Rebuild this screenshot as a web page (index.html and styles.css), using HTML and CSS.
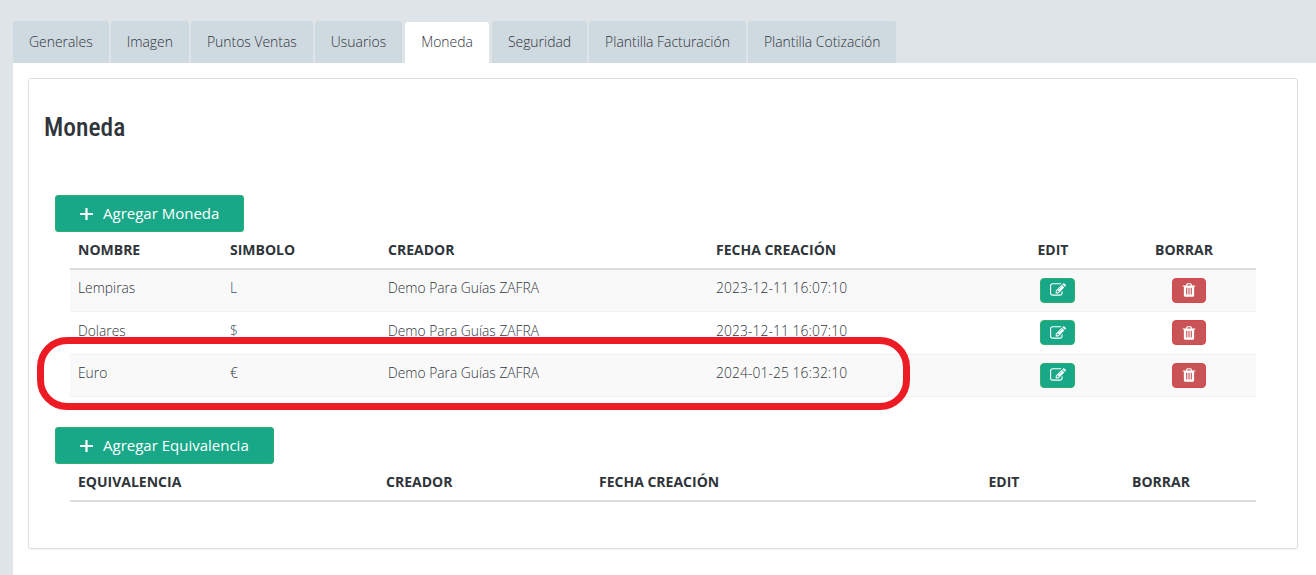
FILE: index.html
```html
<!DOCTYPE html>
<html lang="es">
<head>
<meta charset="utf-8">
<title>Moneda</title>
<link rel="stylesheet" href="styles.css">
</head>
<body>
<svg class="sprite" width="0" height="0" aria-hidden="true">
  <symbol id="i-edit" viewBox="0 0 1792 1792"><path d="M888 1184l116-116-152-152-116 116v56h96v96h56zm440-720q-16-16-33 1l-350 350q-17 17-1 33t33-1l350-350q17-17 1-33zm80 594v190q0 119-84.5 203.5t-203.5 84.5h-832q-119 0-203.5-84.5t-84.5-203.5v-832q0-119 84.5-203.5t203.5-84.5h832q63 0 117 25 15 7 18 23 3 17-9 29l-49 49q-14 14-32 8-23-6-45-6h-832q-66 0-113 47t-47 113v832q0 66 47 113t113 47h832q66 0 113-47t47-113v-126q0-13 9-22l64-64q15-15 35-7t20 29zm-96-738l288 288-672 672h-288v-288zm444 132l-92 92-288-288 92-92q28-28 68-28t68 28l152 152q28 28 28 68t-28 68z"/></symbol>
  <symbol id="i-trash" viewBox="0 0 1792 1792"><path d="M704 1376v-704q0-14-9-23t-23-9h-64q-14 0-23 9t-9 23v704q0 14 9 23t23 9h64q14 0 23-9t9-23zm256 0v-704q0-14-9-23t-23-9h-64q-14 0-23 9t-9 23v704q0 14 9 23t23 9h64q14 0 23-9t9-23zm256 0v-704q0-14-9-23t-23-9h-64q-14 0-23 9t-9 23v704q0 14 9 23t23 9h64q14 0 23-9t9-23zm-544-992h448l-48-117q-7-9-17-11h-317q-10 2-17 11zm928 32v64q0 14-9 23t-23 9h-96v948q0 83-47 143.5t-113 60.5h-832q-66 0-113-58.5t-47-141.5v-952h-96q-14 0-23-9t-9-23v-64q0-14 9-23t23-9h309l70-167q15-37 54-63t79-26h320q40 0 79 26t54 63l70 167h309q14 0 23 9t9 23z"/></symbol>
  <symbol id="i-plus" viewBox="0 0 13 12"><path d="M5.4 0h2.2v4.9H13v2.2H7.600V12H5.400V7.100H0V4.900h5.400z"/></symbol>
</svg>
<nav class="tabs">
  <a class="tab">Generales</a>
  <a class="tab">Imagen</a>
  <a class="tab">Puntos Ventas</a>
  <a class="tab">Usuarios</a>
  <a class="tab tab-active">Moneda</a>
  <a class="tab">Seguridad</a>
  <a class="tab">Plantilla Facturación</a>
  <a class="tab">Plantilla Cotización</a>
</nav>
<main class="panel">
  <section class="card">
    <h2 class="title">Moneda</h2>
    <button class="add"><svg class="plus"><use href="#i-plus"/></svg>Agregar Moneda</button>
    <table class="grid grid-first">
      <colgroup><col class="c152"><col class="c158"><col class="c328"><col class="c294"><col class="c110"><col class="c144"></colgroup>
      <thead><tr><th>NOMBRE</th><th>SIMBOLO</th><th>CREADOR</th><th>FECHA CREACIÓN</th><th class="mid th-edit">EDIT</th><th class="mid">BORRAR</th></tr></thead>
      <tbody>
        <tr><td>Lempiras</td><td class="sym">L</td><td>Demo Para Guías ZAFRA</td><td class="date">2023-12-11 16:07:10</td><td class="mid"><a class="act edit"><svg><use href="#i-edit"/></svg></a></td><td class="mid td-del"><a class="act del"><svg><use href="#i-trash"/></svg></a></td></tr>
        <tr><td>Dolares</td><td class="sym">$</td><td>Demo Para Guías ZAFRA</td><td class="date">2023-12-11 16:07:10</td><td class="mid"><a class="act edit"><svg><use href="#i-edit"/></svg></a></td><td class="mid td-del"><a class="act del"><svg><use href="#i-trash"/></svg></a></td></tr>
        <tr><td>Euro</td><td>€</td><td>Demo Para Guías ZAFRA</td><td class="date">2024-01-25 16:32:10</td><td class="mid"><a class="act edit"><svg><use href="#i-edit"/></svg></a></td><td class="mid td-del"><a class="act del"><svg><use href="#i-trash"/></svg></a></td></tr>
      </tbody>
    </table>
    <button class="add add-second"><svg class="plus"><use href="#i-plus"/></svg>Agregar Equivalencia</button>
    <table class="grid">
      <colgroup><col class="c308"><col class="c213"><col class="c351"><col class="c124"><col class="c190"></colgroup>
      <thead><tr><th>EQUIVALENCIA</th><th>CREADOR</th><th>FECHA CREACIÓN</th><th class="mid">EDIT</th><th class="mid">BORRAR</th></tr></thead>
    </table>
  </section>
</main>
<div class="highlight"></div>
</body>
</html>
```
FILE: styles.css
```css
* { box-sizing: border-box; }
html, body { height: 100%; }
body {
  margin: 0;
  padding: 21px 0 0 13px;
  background: #dfe4e8;
  font-family: "Open Sans", sans-serif;
  color: #333a40;
  overflow: hidden;
  position: relative;
}
.sprite { position: absolute; }
.tabs { display: flex; height: 42px; }
.tab {
  display: flex;
  align-items: center;
  padding: 0 16px 2px;
  margin-right: 2px;
  background: #cfd9e0;
  border-radius: 3px 3px 0 0;
  font-size: 13.93px;
  font-weight: 300;
  color: #2f353b;
  white-space: nowrap;
}
.tab:nth-child(4) { margin-right: 3px; }
.tab-active { background: #fff; margin-right: 3px; margin-top: 1px; padding-bottom: 3px; }
.panel {
  background: #fff;
  padding: 15px 18px 40px 15px;
  height: 512px;
}
.card {
  height: 471px;
  border: 1px solid #dcdfe1;
  border-radius: 3px;
  box-shadow: 0 1px 1px rgba(0,0,0,.04);
}
.title {
  margin: 0;
  padding: 31px 0 0 15px;
  height: 116px;
  font-family: Roboto, sans-serif;
  font-stretch: 85%;
  font-size: 25.5px;
  line-height: 34px;
  font-weight: 500;
  color: #2f353a;
}
.add {
  display: flex;
  align-items: center;
  height: 37px;
  margin-left: 26px;
  padding: 0 24px 2px;
  background: #18a888;
  border: 1px solid #2dae72;
  border-radius: 3px;
  color: #fff;
  font-family: "Open Sans", sans-serif;
  font-size: 15px;
}
.add-second { margin-top: 30px; padding-bottom: 0; }
.plus { width: 13px; height: 12px; margin: 2px 10px 0 0; fill: #fff; }
.grid {
  width: 1186px;
  margin-left: 41px;
  table-layout: fixed;
  border-collapse: collapse;
}
.c152 { width: 152px; } .c158 { width: 158px; } .c328 { width: 328px; }
.c294 { width: 294px; } .c110 { width: 110px; } .c144 { width: 144px; }
.c308 { width: 308px; } .c213 { width: 213px; } .c351 { width: 351px; }
.c124 { width: 124px; } .c190 { width: 190px; }
th {
  height: 37px;
  padding: 0 8px;
  text-align: left;
  font-size: 14px;
  font-weight: 700;
  color: #2f353a;
  border-bottom: 2px solid #dcdcdc;
}
.grid-first th { padding-bottom: 2px; }
td {
  height: 42px;
  padding: 0 8px 5px;
  font-size: 13.8px;
  font-weight: 300;
  color: #2f353b;
  border-bottom: 1px solid #eff3f6;
}
tbody tr:nth-child(odd) td { background: #f9f9f9; }
tbody tr:nth-child(2) td { height: 43px; }
th.mid, td.mid { text-align: center; }
td.mid { padding: 0 8px; }
.grid-first th.th-edit { padding-right: 16px; }
td.td-del { padding-left: 18px; }
.date { letter-spacing: .1px; }
.sym { color: #3a5068; }
.act {
  display: inline-flex;
  align-items: center;
  justify-content: center;
  height: 25px;
  border-radius: 4px;
  vertical-align: middle;
}
.act svg { width: 16px; height: 16px; fill: #fff; }
.edit { width: 35px; padding-left: 2px; background: #18a888; border: 1px solid #2fae6e; }
.del { width: 34px; background: #c95457; border: 1px solid #d9464a; }
.highlight {
  position: absolute;
  left: 37px;
  top: 337px;
  width: 873px;
  height: 73px;
  border: 7px solid #ed1c24;
  border-radius: 30px;
}
```
